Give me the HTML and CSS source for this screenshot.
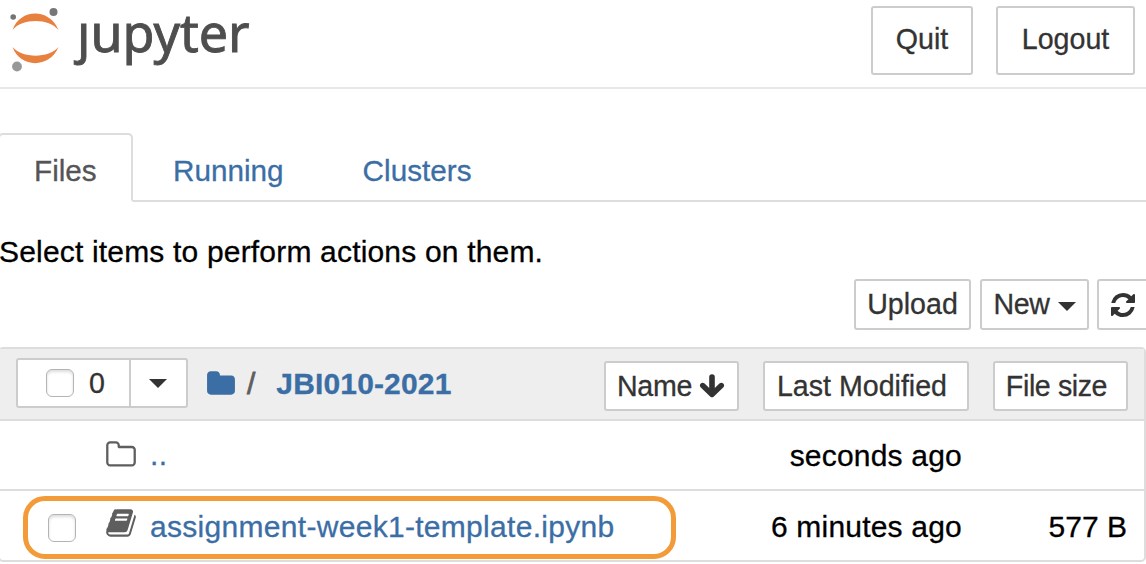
FILE: index.html
```html
<!DOCTYPE html>
<html lang="en">
<head>
<meta charset="utf-8">
<title>Jupyter</title>
<link rel="stylesheet" href="styles.css">
</head>
<body>
<header class="header">
  <a class="brand">
    <svg class="brand-mark" width="66" height="76" viewBox="0 0 66 76">
      <path fill="#e8803e" d="M12.500 30C20 8 50 8 58.500 30C49 18 22 18 12.500 30ZM12.500 47C20 68.500 50 68.500 58.500 47C49 58.500 22 58.500 12.500 47Z"/>
      <circle cx="13.200" cy="17" r="2.800" fill="#747474"/>
      <circle cx="53.500" cy="12" r="4" fill="#767676"/>
      <circle cx="17" cy="66.500" r="4.900" fill="#989898"/>
    </svg>
    <span class="wordmark"><span class="dotless">j</span>upyter</span>
  </a>
  <div class="session">
    <button class="btn btn-large quit">Quit</button>
    <button class="btn btn-large logout">Logout</button>
  </div>
</header>
<nav class="tabs">
  <a class="tab active">Files</a>
  <a class="tab running">Running</a>
  <a class="tab clusters">Clusters</a>
</nav>
<p class="hint">Select items to perform actions on them.</p>
<div class="toolbar">
  <button class="btn upload">Upload</button>
  <button class="btn new">New<span class="caret"></span></button>
  <button class="btn refresh"><svg width="28" height="28" viewBox="0 0 1792 1792"><path fill="#333" d="M1639 1056q0 5-1 7-64 268-268 434.500t-478 166.500q-146 0-282.500-55t-243.500-157l-129 129q-19 19-45 19t-45-19-19-45v-448q0-26 19-45t45-19h448q26 0 45 19t19 45-19 45l-137 137q71 66 161 102t187 36q134 0 250-65t186-179q11-17 53-117 8-23 30-23h192q13 0 22.500 9.500t9.500 22.500zm25-800v448q0 26-19 45t-45 19h-448q-26 0-45-19t-19-45 19-45l138-138q-148-137-349-137-134 0-250 65t-186 179q-11 17-53 117-8 23-30 23h-199q-13 0-22.500-9.500t-9.500-22.500v-7q65-268 270-434.500t480-166.500q146 0 284 55.500t245 156.500l130-129q19-19 45-19t45 19 19 45z"/></svg></button>
</div>
<main class="list">
  <div class="list-header">
    <div class="select-group">
      <button class="btn select-all"><span class="checkbox"></span><span>0</span></button>
      <button class="btn select-menu"><span class="caret"></span></button>
    </div>
    <div class="crumbs">
      <svg width="30" height="30" viewBox="0 0 1792 1792"><path fill="#3b6ea5" d="M1728 608v704q0 92-66 158t-158 66h-1216q-92 0-158-66t-66-158v-960q0-92 66-158t158-66h320q92 0 158 66t66 158v32h672q92 0 158 66t66 158z"/></svg>
      <span class="slash">/</span>
      <a class="crumb">JBI010-2021</a>
    </div>
    <div class="sorters">
      <button class="btn sort-name">Name<svg width="26" height="26" viewBox="0 0 26 26"><path fill="none" stroke="#333" stroke-width="5.600" stroke-linecap="round" d="M13 4V19"/><path fill="none" stroke="#333" stroke-width="5.400" stroke-linecap="round" stroke-linejoin="round" d="M3.700 12.500L13 21.500L22.300 12.500"/></svg></button>
      <button class="btn sort-date">Last Modified</button>
      <button class="btn sort-size">File size</button>
    </div>
  </div>
  <div class="row parent">
    <svg class="item-icon" width="32" height="32" viewBox="0 0 1792 1792"><path fill="#5e5e5e" d="M1600 1312v-704q0-40-28-68t-68-28h-704q-40 0-68-28t-28-68v-64q0-40-28-68t-68-28h-320q-40 0-68 28t-28 68v960q0 40 28 68t68 28h1216q40 0 68-28t28-68zm128-704v704q0 92-66 158t-158 66h-1216q-92 0-158-66t-66-158v-960q0-92 66-158t158-66h320q92 0 158 66t66 158v32h672q92 0 158 66t66 158z"/></svg>
    <a class="item-name">..</a>
    <span class="modified">seconds ago</span>
    <span class="size"></span>
  </div>
  <div class="row file">
    <span class="checkbox"></span>
    <svg class="item-icon" width="32" height="32" viewBox="0 0 1792 1792"><path fill="#5e5e5e" d="M1703 478q40 57 18 129l-275 906q-19 64-76.500 107.500t-122.500 43.500h-923q-77 0-148.500-53.500t-99.500-131.500q-24-67-2-127 0-4 3-27t4-37q1-8-3-21.500t-3-19.500q2-11 8-21t16.500-23.500 16.500-23.500q23-38 45-91.500t30-91.500q3-10 .5-30t-.5-28q3-11 17-28t17-23q21-36 42-92t25-90q1-9-2.500-32t.5-28q4-13 22-30.500t22-22.500q19-26 42.500-84.500t27.500-96.500q1-8-3-25.500t-2-26.500q2-8 9-18t18-23 17-21q8-12 16.500-30.500t15-35 16-36 19.500-32 26.500-23.500 36-11.500 47.500 5.500l-1 3q38-9 51-9h761q74 0 114 56t18 130l-274 906q-36 119-71.500 153.500t-128.500 34.500h-869q-27 0-38 15-11 16-1 43 24 70 144 70h923q29 0 56-15.500t35-41.500l300-987q7-22 5-57 38 15 59 43zm-1064 2q-4 13 2 22.500t20 9.500h608q13 0 25.500-9.500t16.500-22.500l21-64q4-13-2-22.500t-20-9.500h-608q-13 0-25.500 9.500t-16.500 22.500zm-83 256q-4 13 2 22.500t20 9.500h608q13 0 25.500-9.500t16.500-22.500l21-64q4-13-2-22.500t-20-9.500h-608q-13 0-25.500 9.500t-16.500 22.500z"/></svg>
    <a class="item-name">assignment-week1-template.ipynb</a>
    <span class="modified">6 minutes ago</span>
    <span class="size">577 B</span>
    <span class="highlight"></span>
  </div>
</main>
</body>
</html>
```
FILE: styles.css
```css
* { box-sizing: border-box; }
body {
  margin: 0;
  height: 564px;
  overflow: hidden;
  background: #fff;
  color: #000;
  font: 30px/36px "Liberation Sans", Arial, sans-serif;
  -webkit-text-stroke: 0.3px currentColor;
}
svg { display: block; flex: none; }
.header {
  display: flex;
  justify-content: space-between;
  align-items: flex-start;
  height: 89px;
  padding-right: 11px;
  border-bottom: 2px solid #e7e7e7;
}
.brand { display: flex; }
.wordmark {
  display: flex;
  margin-left: 11px;
  font: 52px/63px "Noto Sans", sans-serif;
  color: #4e4e4e;
  -webkit-text-stroke: 0.9px currentColor;
}
.dotless { clip-path: inset(20px -10px -10px -20px); }
.session { display: flex; gap: 23px; padding-top: 6px; }
.btn {
  display: flex;
  align-items: center;
  justify-content: center;
  height: 51px;
  margin: 0;
  padding: 0;
  border: 2px solid #ccc;
  border-radius: 3px;
  background: #fff;
  color: #333;
  font: 28.6px/34px "Liberation Sans", Arial, sans-serif;
  white-space: nowrap;
}
.btn-large { height: 69px; padding-bottom: 4px; }
.quit { width: 102px; }
.logout { width: 139px; }
.tabs {
  display: flex;
  height: 69px;
  margin-top: 44px;
  border-bottom: 2px solid #ddd;
}
.tab { padding-top: 20px; color: #3b6ea5; font-size: 29.700px; }
.tab.active {
  width: 135px;
  height: 69px;
  margin-left: -2px;
  padding: 18px 0 0 34px;
  border: 2px solid #ddd;
  border-bottom-color: #fff;
  border-radius: 5px 5px 0 0;
  background: #fff;
  color: #555;
}
.running { margin-left: 40px; }
.clusters { margin-left: 79px; }
.hint { margin: 32px 0 0 -1px; height: 45px; letter-spacing: 0.18px; }
.toolbar { display: flex; }
.upload { width: 117px; margin-left: 854px; padding-bottom: 2px; }
.new { width: 109px; margin-left: 9px; padding-bottom: 1px; letter-spacing: -0.400px; }
.refresh { width: 60px; margin: 0 -11px 0 8px; padding-right: 8px; }
.caret {
  border: 9px solid transparent;
  border-top-color: currentColor;
  border-bottom: 0;
}
.new .caret { margin: 4px 0 0 8px; }
.list {
  height: 215px;
  margin: 17px 0 0 -2px;
  border: 2px solid #ddd;
  border-radius: 5px;
}
.list-header {
  display: flex;
  height: 72px;
  border-bottom: 2px solid #ddd;
  background: #eee;
}
.select-group { display: flex; margin: 9px 0 0 16px; }
.select-group .btn { height: 50px; }
.select-all { width: 115px; gap: 15px; padding-left: 4px; border-radius: 3px 0 0 3px; }
.select-menu { width: 59px; margin-left: -2px; padding-right: 2px; border-radius: 0 3px 3px 0; }
.checkbox {
  flex: none;
  width: 28px;
  height: 28px;
  border: 1.500px solid #b4b4b4;
  border-radius: 6px;
  background: #fff;
  box-shadow: inset 0 2px 3px #ddd;
}
.crumbs {
  display: flex;
  align-items: center;
  height: 70px;
  margin-left: 18px;
}
.slash { margin-left: 11px; color: #5e5e5e; -webkit-text-stroke-width: 0.8px; }
.crumb { margin-left: 21px; color: #3b6ea5; font-weight: bold; letter-spacing: 0.150px; }
.sorters { display: flex; gap: 24px; margin: 12px 16px 0 auto; }
.sorters .btn { height: 50px; padding-bottom: 1px; }
.sort-name { width: 135px; gap: 7px; padding-right: 1px; letter-spacing: -0.300px; }
.sorters .sort-date { width: 206px; padding-right: 8px; }
.sorters .sort-size { width: 135px; padding-right: 8px; letter-spacing: -0.400px; }
.row {
  position: relative;
  display: flex;
  align-items: center;
  height: 70px;
}
.parent { padding-left: 105px; border-bottom: 2px solid #ddd; }
.file { padding: 3px 0 0 48px; }
.item-name { margin-left: 13px; color: #3b6ea5; letter-spacing: 0.300px; }
.file .item-name, .file .modified, .file .size { margin-top: -2px; }
.parent .modified { margin-top: 2px; }
.file .item-icon { margin: -10px 0 0 29px; }
.modified { margin-left: auto; letter-spacing: 0.200px; }
.size { width: 182px; padding-right: 17px; text-align: right; }
.highlight {
  position: absolute;
  left: 23px;
  top: 5px;
  width: 653px;
  height: 63px;
  border: 5px solid #f29b38;
  border-radius: 22px;
}
```
